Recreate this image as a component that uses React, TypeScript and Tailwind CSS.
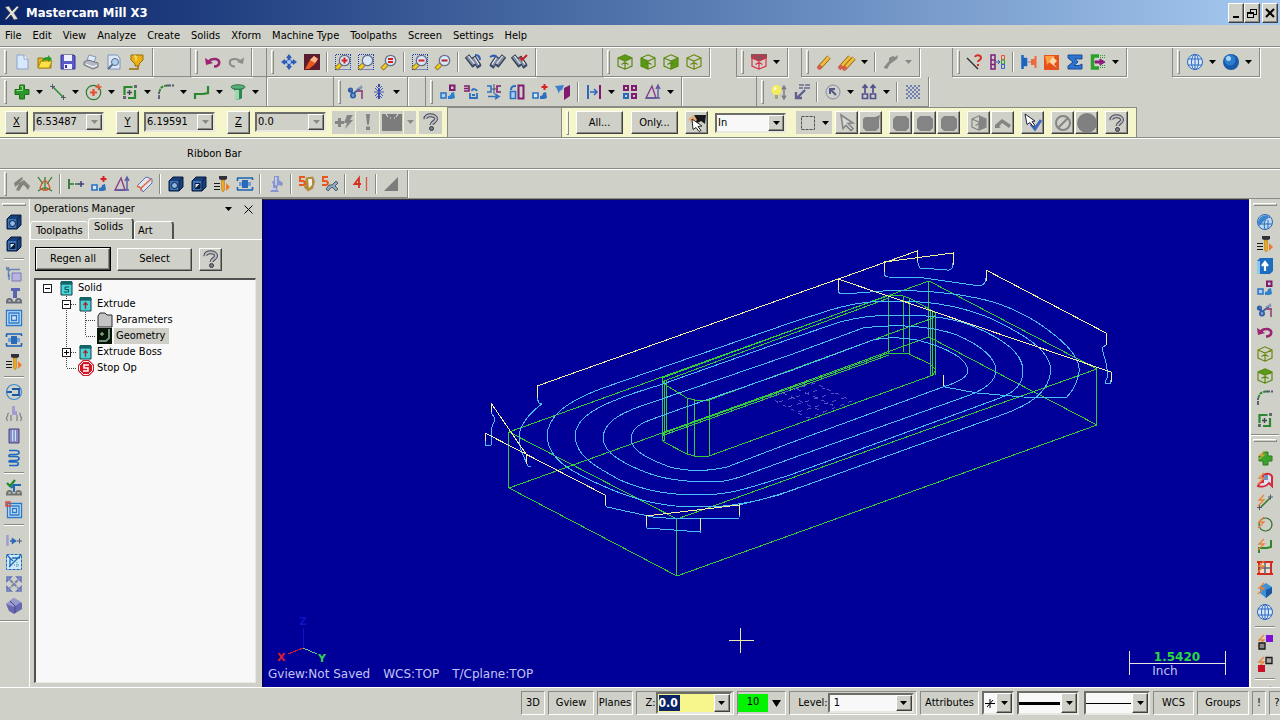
import { useState, type ReactNode } from "react";
import clsx from "clsx";

const cube = (stroke: string, face?: ReactNode) => (
  <>
    {face}
    <path
      d="M1 4 8 .8 15 4v8l-7 3.200L1 12zM1 4l7 3 7-3M8 7v8M4.500 10.500l3.500-2 3.500 2"
      fill="none"
      stroke={stroke}
      strokeWidth="1.2"
    />
  </>
);

const darkCube = (hole: ReactNode) => (
  <>
    <path d="M1 5 5 1h10v10l-4 4H1z" fill="#16417c" stroke="#0a1a3c" />
    <path d="M2 5h9v9H2z" fill="#3f74b8" />
    <path d="M11 5l4-4M11 5v10" stroke="#0a1a3c" />
    {hole}
  </>
);

const magnifier = (inner?: ReactNode, box?: boolean) => (
  <>
    {box && <path d="M1 .5h15M.5 15.5h15M.5 1v15M15.5 1v15" stroke="#1c3cb4" strokeDasharray="1 1" />}
    <path d="M1 15l6-6" stroke="#7a6420" strokeWidth="4.5" />
    <path d="M1.5 14.5l5-5" stroke="#f4cc20" strokeWidth="3" />
    <circle cx="9.5" cy="6.500" r="5.200" fill="#d8e8f8" stroke="#687088" strokeWidth="1.3" />
    {inner}
  </>
);

const binocular = (extra: ReactNode) => (
  <>
    <path d="M1 2l7 9M7 3l6 9" stroke="#30384a" strokeWidth="5.500" />
    <path d="M1.500 2.500l6.500 8M7.500 4l5 7.500" stroke="#8490a4" strokeWidth="3.500" />
    <path d="M2.500 2l6 8M8.500 3.500l4.500 7" stroke="#e4eaf2" strokeWidth="1.2" />
    <path d="M6 13l4-3M11 14l4-3" stroke="#384870" strokeWidth="2" />
    {extra}
  </>
);

const pencil = (x: number) => (
  <>
    <path d={`M${x} 14 l10 -11`} stroke="#8a6414" strokeWidth="4.5" />
    <path d={`M${x} 14 l10 -11`} stroke="#f0bc3c" strokeWidth="3" />
    <path d={`M${x - 1} 15 l3 -3.5`} stroke="#d85a50" strokeWidth="3.5" />
  </>
);

const bolt = <path d="M7 1 2 6h5l-6 6" fill="none" stroke="#e8843c" strokeWidth="1.3" />;

const icons: Record<string, ReactNode> = {
  new: (
    <>
      <path d="M3 1h7l4 4v10H3z" fill="#d8e8fc" stroke="#8aa4cc" />
      <path d="M10 1v4h4" fill="#fff" stroke="#8aa4cc" />
    </>
  ),
  open: (
    <>
      <path d="M1 14V4h5l1 2h7v8z" fill="#e8b41c" stroke="#9a7410" />
      <path d="M1 14l3-7h11l-3 7z" fill="#fbe04a" stroke="#b08a14" />
      <path d="M5 8c0-4 3-5 6-5V1l4 4-4 3V6c-3 0-4 0-6 2z" fill="#2c9a2c" />
    </>
  ),
  save: (
    <>
      <path d="M1 1h13l1 1v13H1z" fill="#5a5ac8" stroke="#34349a" />
      <path d="M4 1h8v6H4zM4 10h8v5H4z" fill="#eef0ff" />
      <path d="M5 11h2v3H5z" fill="#34349a" />
    </>
  ),
  print: (
    <>
      <path d="M6 1l7 2-2 5-7-2z" fill="#e0ecfc" stroke="#8a96b0" />
      <path d="M1 8l4-2 10 3v4l-5 2-9-4z" fill="#b4b8c4" stroke="#70747e" />
      <path d="M3 10l7 3 4-2" fill="none" stroke="#fff" />
    </>
  ),
  preview: (
    <>
      <path d="M2 1h9l3 3v11H2z" fill="#dce8f8" stroke="#7c94bc" />
      <circle cx="9" cy="8" r="3.5" fill="#b0d0f0" stroke="#5c6c88" />
      <path d="M6.5 10.5 2 15" stroke="#5c6c88" strokeWidth="2" />
    </>
  ),
  funnel: (
    <>
      <path d="M2 1h12v5l-4 4v2H6v-2L2 6z" fill="#e8b010" stroke="#9a6e08" />
      <path d="M5 2h2v5" stroke="#fff0a0" fill="none" />
      <path d="M0 15h9v-3" fill="none" stroke="#9a6e08" strokeWidth="1.5" />
    </>
  ),
  undo: (
    <>
      <path d="M9 12.500c7 0 7-8 0-7.500-2 0-4 1-5 2.500" fill="none" stroke="#9c2474" strokeWidth="2.6" />
      <path d="M0 4l1 7 7-2z" fill="#9c2474" />
    </>
  ),
  redo: (
    <>
      <path d="M7 12.500c-7 0-7-8 0-7.500 2 0 4 1 5 2.500" fill="none" stroke="#8c8c8c" strokeWidth="2.200" />
      <path d="M16 3.500l-1 6.500-6-2z" fill="#8c8c8c" />
    </>
  ),
  pan: (
    <>
      <path d="M8 0l3 4H9.5v2.5H12V5l4 3-4 3V9.5H9.5V12H11l-3 4-3-4h1.5V9.5H4V11L0 8l4-3v1.5h2.5V4H5z" fill="#2c5cb8" />
      <circle cx="8" cy="8" r="2" fill="#a8c8f4" />
    </>
  ),
  repaint: (
    <>
      <path d="M0 0h16v16H0z" fill="#5a1c30" />
      <path d="M1 15 6 6l4-4 4 3-3 5-6 5z" fill="#e85a1c" />
      <path d="M6 6l4-4 4 3-3 4z" fill="#fcb488" />
    </>
  ),
  repaintOrange: (
    <>
      <path d="M0 1h15v15H0z" fill="#e8501c" />
      <path d="M1 2h10L3 11z" fill="#fca040" />
      <path d="M5 8l4-5 4 4-3 3 3 4z" fill="#fcd8a8" />
    </>
  ),
  zoomWindow: magnifier(<path d="M9.5 3.5v6M6.5 6.5h6" stroke="#d82020" strokeWidth="2" />, true),
  zoomTarget: magnifier(null, true),
  zoomSel: magnifier(<path d="M7 5h5M7 8h5" stroke="#d82020" strokeWidth="1.800" />),
  unzoom: magnifier(<path d="M6.5 6.5h6" stroke="#d82020" strokeWidth="2" />, true),
  unzoomHalf: magnifier(<path d="M6.5 6.5h6" stroke="#b82020" strokeWidth="2" />),
  bino: binocular(<path d="M9 1c3 0 5 2 5 5" fill="none" stroke="#2c5cb8" strokeWidth="2" />),
  binoBack: (
    <g transform="translate(16 0) scale(-1 1)">
      {binocular(<path d="M15 3c-3-2-5-2-7 0" fill="none" stroke="#2c5cb8" strokeWidth="2" />)}
    </g>
  ),
  binoCheck: binocular(<path d="M8 3l2 3 5-5" fill="none" stroke="#c82020" strokeWidth="2" />),
  cubeTop: cube("#5a8a10", <path d="M1 4 8 .8 15 4 8 7z" fill="#5a9a18" />),
  cubeFront: cube("#5a8a10", <path d="M1 4l7 3v8l-7-3z" fill="#5a9a18" />),
  cubeSide: cube("#5a8a10", <path d="M15 4 8 7v8l7-3z" fill="#5a9a18" />),
  cubeIso: cube("#6a8a10"),
  cubeRed: cube("#d83048", <path d="M0 0h16v4l-8 3-8-3z" fill="#8a5058" />),
  pencil: pencil(3),
  pencils: (
    <>
      {pencil(1)}
      <g transform="translate(4 1)">{pencil(1)}</g>
    </>
  ),
  eraserGray: <path d="M1 13l5-6V4l4-2 2 1 3-2-1 4-7 5-3 5-3-1z" fill="#8a8a84" />,
  lineQ: (
    <>
      <path d="M0 4l11 11" stroke="#282828" strokeWidth="1.2" />
      <path d="M8 3c1-3 6-2 6 1 0 2-3 2-3 4M11 10v2" fill="none" stroke="#d82c20" strokeWidth="2" />
    </>
  ),
  columns: (
    <>
      <path d="M1 1h4v14H1zM1 6h4M1 10.5h4" fill="none" stroke="#7c1c7c" strokeWidth="1.5" />
      <path d="M6 8h4M8 6l2 2-2 2" stroke="#2c5cb8" fill="none" />
      <path d="M11.5 1.500h3v4h-3z" fill="none" stroke="#e85030" />
      <path d="M11.5 6h3v4h-3z" fill="none" stroke="#30a030" />
      <path d="M11.5 10.5h3v4h-3z" fill="none" stroke="#3060d0" />
    </>
  ),
  blocks: (
    <>
      <path d="M1.500 1v14M2 5h3v6H2z" fill="#1c64c0" stroke="#1c64c0" strokeWidth="2.500" />
      <path d="M14.500 2v12M11 6h3v4h-3z" fill="#f0683c" stroke="#f0683c" strokeWidth="2" />
      <path d="M6 8h4" stroke="#9a9ab0" strokeWidth="1.5" />
    </>
  ),
  sigma: <path d="M1 1h14v4h-3L8 4.5 11 8l-4 3.500h5L15 10v5H1v-3l5-4-5-4z" fill="#2c74d0" stroke="#1a4a98" />,
  exit: (
    <>
      <path d="M9 2H2.500v12H9" fill="none" stroke="#2ca02c" strokeWidth="3.5" />
      <path d="M10.500 1v4M12.500 1v4M14.500 1v4M10.500 11v4M12.500 11v4M14.500 11v4" stroke="#2ca02c" strokeDasharray="1 1" />
      <path d="M5 7h5V5l5 3-5 3V9H5z" stroke="#8c1c7c" fill="#8c1c7c" />
    </>
  ),
  globe: (
    <g fill="none" stroke="#2c68c0">
      <circle cx="8" cy="8" r="7.5" fill="#d8e8f8" />
      <ellipse cx="8" cy="8" rx="3.5" ry="7.5" />
      <path d="M1 5h14M1 11h14M8 .5v15" />
    </g>
  ),
  sphere: (
    <>
      <circle cx="8" cy="8" r="8" fill="#1a58a8" />
      <circle cx="7" cy="6" r="5.5" fill="#2c7ccc" />
      <circle cx="5.5" cy="4.5" r="2.5" fill="#a8d4f8" />
    </>
  ),
  plus: (
    <>
      <path d="M5.5 1h5v4.5H15v5h-4.500V15h-5v-4.500H1v-5h4.500z" fill="#2c982c" stroke="#1c701c" />
      <path d="M6.5 2.5h2v4h-6" fill="none" stroke="#90dc80" />
    </>
  ),
  line: (
    <>
      <path d="M3 3l10 10" stroke="#2c882c" strokeWidth="1.5" />
      <path d="M0 2.5h5M2.5 0v5M11 13.5h5M13.5 11v5" stroke="#585878" />
    </>
  ),
  circle: (
    <>
      <circle cx="7.500" cy="8.5" r="7.200" fill="none" stroke="#2c782c" strokeWidth="1.2" />
      <path d="M7.500 5v7M4 8.5h7" stroke="#e8502c" strokeWidth="2.200" />
      <path d="M12.500 0v6M9.5 3h6" stroke="#e8502c" strokeWidth="1.6" />
    </>
  ),
  rect: (
    <>
      <path d="M2.500 11V3h8M13 6v8H6" fill="none" stroke="#2c882c" strokeWidth="2.200" />
      <path d="M7.500 6v5M5 8.5h5" stroke="#404850" strokeWidth="1.5" />
      <path d="M12 1h3v3h-3zM1 12h3v3H1z" fill="#606870" />
    </>
  ),
  fillet: (
    <>
      <path d="M1 15V8M9 1.500h7" stroke="#505870" strokeWidth="1.8" strokeDasharray="4 1" />
      <path d="M1.500 8C2 4 4 2 9 1.500" fill="none" stroke="#2c882c" strokeWidth="1.8" strokeDasharray="3 1" />
    </>
  ),
  spline: <path d="M1 15v-5h8l5-1V2" fill="none" stroke="#2c882c" strokeWidth="2.200" />,
  cylinder: (
    <>
      <path d="M1.500 3h13L12 6v8c-2 2-5 2-7 1V7z" fill="#2c8850" />
      <path d="M5 6h4v9.500c-2 0-3 0-4-.5z" fill="#a0d8b0" />
      <ellipse cx="8" cy="3" rx="7" ry="2.200" fill="#58b078" stroke="#2c7848" />
    </>
  ),
  trim: (
    <>
      <path d="M1 5l5 6M6 9l8-6" stroke="#3c64a8" strokeWidth="2" />
      <circle cx="2.500" cy="6" r="1.800" fill="none" stroke="#2c5ca8" strokeWidth="1.6" />
      <circle cx="5" cy="11.500" r="2.200" fill="#7c9cd0" stroke="#2c5ca8" strokeWidth="1.6" />
      <path d="M9 7h6M14 7v8" stroke="#98507c" strokeWidth="1.8" />
      <path d="M8 5l6-4v4z" fill="#8a98b8" />
    </>
  ),
  breakTool: (
    <>
      <path d="M8 0v16" stroke="#3848a8" strokeWidth="2" strokeDasharray="3 1" />
      <path d="M4 4l8 8M12 4l-8 8M3 8h10M5 2l3 3 3-3M5 14l3-3 3 3" fill="none" stroke="#4858b8" />
    </>
  ),
  xformMove: (
    <>
      <path d="M10 1.500h4.5V6H10z" fill="none" stroke="#801c70" strokeWidth="2" />
      <path d="M1 9h5v5H1z" fill="#a8d0f8" stroke="#2c70c0" strokeWidth="1.5" />
      <path d="M8 15v-3c2 0 3-1 3-3l3-1 1 6-3 1z" fill="#2c80cc" />
    </>
  ),
  xformRotate: (
    <>
      <path d="M1 2h5v5H1M1 4.5h4" fill="none" stroke="#801c70" strokeWidth="1.6" />
      <path d="M9 7c0-3 4-2 5 0" fill="none" stroke="#2c70c0" strokeWidth="2" />
      <path d="M7 9v5h7V9M9 11h3" fill="none" stroke="#2c70c0" strokeWidth="1.8" />
    </>
  ),
  xformMirror: (
    <>
      <path d="M1 2h4v6H1" fill="none" stroke="#2c70c0" strokeWidth="1.6" />
      <path d="M15 2h-4v6h4" fill="none" stroke="#801c70" strokeWidth="1.6" />
      <path d="M8 0v10M6 5h4" stroke="#484870" />
      <path d="M2 12.5h9M9 10l4 2.5L9 15" fill="none" stroke="#2c70c0" strokeWidth="1.6" />
    </>
  ),
  xformScale: (
    <>
      <path d="M9.5 1.500h5v13h-5z" fill="none" stroke="#801c70" strokeWidth="2" />
      <path d="M1.500 7.5h5v7h-5z" fill="#a8d0f8" stroke="#2c70c0" strokeWidth="1.6" />
      <path d="M2 6c0-3 1-4 4-4V1" fill="none" stroke="#2c70c0" strokeWidth="2" />
    </>
  ),
  xformPlus: (
    <>
      <path d="M12.5 0v6M9.5 3h6" stroke="#d82020" strokeWidth="2" />
      <path d="M1 9h5v5H1z" fill="#d8e8f8" stroke="#2c70c0" strokeWidth="1.6" />
      <path d="M8 15v-3c2 0 3-1 3-3l3-1 1 6-3 1z" fill="#2c70c0" />
    </>
  ),
  xformProject: (
    <>
      <path d="M0 2l9-1-2 5c-2 0-3 1-3 4L2 5z" fill="#3c80cc" />
      <path d="M9 4l6-3v11l-6 4z" fill="#801c70" />
    </>
  ),
  offset: (
    <>
      <path d="M2 1v14" stroke="#2c68c0" strokeWidth="2" />
      <path d="M14 1v14" stroke="#801c70" strokeWidth="2" />
      <path d="M4 8h6M8 5l3 3-3 3" fill="none" stroke="#2c68c0" strokeWidth="1.6" />
    </>
  ),
  array: (
    <g fill="none" strokeWidth="2">
      <path d="M2 2h4v4H2zM10 2h4v4h-4zM10 10h4v4h-4z" stroke="#801c70" />
      <path d="M2 10h4v4H2z" stroke="#2c68c0" />
    </g>
  ),
  triangle: (
    <>
      <path d="M1 14 7 2l4 12z" fill="none" stroke="#8a3c8a" strokeWidth="1.4" />
      <path d="M13 14V3M11 5l2-4 2 4M1 14h14" fill="none" stroke="#5a5aa0" strokeWidth="1.4" />
    </>
  ),
  bulb: (
    <>
      <circle cx="5.5" cy="6" r="5" fill="#f4ec58" />
      <circle cx="4" cy="4.5" r="1.5" fill="#fffde0" />
      <path d="M4 11h3v4H4z" fill="#a8a07c" />
      <path d="M13 4v9M11 5.5 13 2l2 3.5M11 11.500l2 3.5 2-3.5" fill="none" stroke="#707080" strokeWidth="1.3" />
    </>
  ),
  arrowDown: (
    <>
      <path d="M5 1h5M11 1h5M5 4h4M10 4h6" stroke="#686890" strokeWidth="1.5" />
      <path d="M11 6 4 13M2 8v6h6" fill="none" stroke="#606090" strokeWidth="2.4" />
    </>
  ),
  circleArrow: (
    <>
      <circle cx="8" cy="8" r="7" fill="none" stroke="#8888a8" />
      <path d="M11 11 6 6M5 10V5h5" fill="none" stroke="#585888" strokeWidth="2" />
    </>
  ),
  upArrows: (
    <g fill="none" stroke="#50508c" strokeWidth="1.7">
      <path d="M4 9V1M1.500 4 4 1l2.5 3M12 9V1M9.5 4 12 1l2.5 3" />
      <path d="M1.500 10h5v4.5h-5zM9.5 10h5v4.5h-5z" />
    </g>
  ),
  checker: (
    <>
      <path d="M1 2h14M1 6h14M1 10h14M1 14h14" stroke="#7480b0" strokeWidth="2" strokeDasharray="2 2" />
      <path d="M3 4h12M3 8h12M3 12h12" stroke="#7480b0" strokeWidth="2" strokeDasharray="2 2" />
    </>
  ),
  fastPoint: <path d="M-1 7h3V4h3v3h3v3H5v3H2v-3h-3zM11 1h6l-3 5h3l-8 9 2-6H8z" fill="#848484" />,
  bang: <path d="M6 0h4L9 10.5H7zM6 12.5h4V16H6z" fill="#848484" />,
  pad: (
    <>
      <path d="M-2 0h20v17H-2z" fill="#7c7c7c" />
      <path d="M2 0l2 3M14 0l-2 3M6 4h1M10 4h1" stroke="#eee" />
    </>
  ),
  help: (
    <>
      <path d="M2.5 5C2 0 13 0 13 5c0 3-4.5 3-4.5 6" fill="none" stroke="#484850" strokeWidth="4" />
      <path d="M2.5 5C2 0 13 0 13 5c0 3-4.5 3-4.5 6" fill="none" stroke="#b8bcc4" strokeWidth="2" />
      <circle cx="8.5" cy="14.500" r="2" fill="#787c84" stroke="#383840" />
    </>
  ),
  pickCursor: (
    <>
      <path d="M5 0h12l-1 9-4-3-5 3z" fill="#18181c" />
      <path d="M-1 4l6-4 3 5-4 4z" fill="#e8ac7c" />
      <path d="M3 4l10 7-4 .5 3 4-2 1-3-4-3 2z" fill="#fff" stroke="#282828" />
    </>
  ),
  marquee: <path d="M1.500 1.500h13v13h-13z" fill="none" stroke="#505050" strokeDasharray="3 1" />,
  cursor: <path d="M2 0l12 8-5 .5 5 5-2 2-5-5-3 3z" fill="#d8d8d2" stroke="#848484" strokeWidth="1.6" />,
  blob: <path d="M3 1h10l3 3v9l-3 3H3l-3-3V4z" fill="#848484" />,
  blobEdge: <path d="M2 2h10l5-2-1 6v7l-3 3H3l-3-3V4z" fill="#848484" />,
  ball: <circle cx="8" cy="8" r="10" fill="#808080" />,
  cubeGray: cube("#848484", <path d="M15 4 8 7v8l7-3zM8 1v6l6-3z" fill="#848484" />),
  arrowGray: <path d="M0 13v-3l7-6 9 6-2 3-7-5-3 4 2 1z" fill="#848484" />,
  cursorCheck: (
    <>
      <path d="M6 9l4 5 6-9" fill="none" stroke="#3c64c0" strokeWidth="3" />
      <path d="M0-1l10 7-3 .500 3 4-2 1-3-4-3 2z" fill="#fff" stroke="#202838" />
    </>
  ),
  ban: (
    <g fill="none" stroke="#848484" strokeWidth="2">
      <circle cx="8" cy="8" r="7" />
      <path d="M12.500 3.5 3.500 12.5" />
    </g>
  ),
  hammerGray: <path d="M0 7l8-6 1 2-4 4 5-3 6 6-2 4-3-4-2-1-4 6-3-1 3-6-4 3z" fill="#84847c" />,
  sail: (
    <>
      <path d="M1 1l5 7M15 1l-5 7M1 15l5-3h4l5 3M8 1v14" fill="none" stroke="#2c782c" strokeWidth="1.2" />
      <path d="M5 7c2-3 4-3 6 0l2 5-3 2H6l-3-2z" fill="none" stroke="#d8582c" strokeWidth="1.3" />
    </>
  ),
  dim: (
    <>
      <path d="M1 3v10" stroke="#2c782c" strokeWidth="1.8" />
      <path d="M2 8h8" stroke="#2c782c" strokeWidth="1.6" strokeDasharray="4 1" />
      <path d="M10 8h6M13 5v6" stroke="#3c3c78" strokeWidth="1.4" />
    </>
  ),
  rollers: (
    <>
      <path d="M0 10 9 1l6 2v4l-9 9-2-4z" fill="#e0e4ee" stroke="#6070b0" />
      <path d="M4 12l10-9M0 10l4 2v3" fill="none" stroke="#e0683c" strokeWidth="1.5" />
    </>
  ),
  cubeHole: darkCube(<circle cx="6.5" cy="9.5" r="3" fill="#8cb8e8" stroke="#0a1a3c" />),
  cubeSquare: darkCube(
    <>
      <path d="M4 7.500h5v5H4z" fill="#d8e4f0" stroke="#0a1a3c" />
      <path d="M4 12.5l5-5v5z" fill="#0a1a3c" />
    </>
  ),
  drill: (
    <>
      <path d="M5 0h8v3l-2 1H7L5 3z" fill="#30303c" />
      <path d="M7.500 4h3v10L9 16l-1.500-2z" fill="#e8a820" stroke="#a87410" strokeWidth=".5" />
      <path d="M0 7.5h6M0 10.5h6M0 13.5h6" stroke="#181818" strokeWidth="1.2" />
      <path d="M12 7l4 4-4 4z" fill="#f0782c" />
    </>
  ),
  pocket: (
    <>
      <path d="M0 2h16M0 14h16M.5 2v3M15.500 11v3M15.500 2v2M.5 11v3" stroke="#1c64b4" strokeWidth="1.6" />
      <path d="M2 6h12v4H2z" fill="#6ca0dc" />
      <path d="M5 4h6v8H5z" fill="#2c68b8" />
    </>
  ),
  holder: (
    <>
      <path d="M6 0h5v4l4 3-1 3-4-1-1 4 2 3H2l3-4V8L4 6l2-2z" fill="#8894cc" />
      <path d="M8 1v8M3 13h5" stroke="#d0d8f4" strokeWidth="1.6" />
    </>
  ),
  five: (
    <>
      <path d="M7 1.500l7-1 2 5-2 7-5 3-4-4z" fill="#b08c3c" />
      <path d="M9 3h4v6l-3 3z" fill="#f0f0ec" />
      <path d="M6 1H1v4h3c3 1 2 4 0 4H0" fill="none" stroke="#e8581c" strokeWidth="2" />
    </>
  ),
  fiveTool: (
    <>
      <path d="M6 1H1v4h3c3 1 2 4 0 4H0" fill="none" stroke="#e8581c" strokeWidth="2" />
      <path d="M7 9l3 0 4-4 2 2-3 3 3 3-2 2-4-4-4 4-2-2z" fill="#8ca8c0" stroke="#505c68" />
    </>
  ),
  four: (
    <>
      <path d="M6 12V2L1.500 8H8" fill="none" stroke="#d83020" strokeWidth="1.800" />
      <path d="M13.5 1v14" stroke="#d85840" strokeWidth="1.3" />
    </>
  ),
  wedge: <path d="M0 15 14 1v14z" fill="#7c7c7c" />,
  contour: (
    <>
      <path d="M0 3.500h14M2.500 1v10M0 1l4 4" stroke="#6c84b4" strokeWidth="1.5" fill="none" />
      <path d="M6 7h9v8H6z" fill="#b8b4e0" stroke="#7878b8" />
      <path d="M3 8v6" stroke="#2c70c0" />
    </>
  ),
  mill: (
    <>
      <path d="M5 0h9v3h-3v7H7V3H5z" fill="#5a64b0" />
      <path d="M1 14c0-4 5-4 5 0M10 14c0-4 5-4 5 0M0 14.5h16" fill="none" stroke="#686c78" strokeWidth="2" />
    </>
  ),
  spiral: (
    <>
      <path d="M0 0h16v16H0z" fill="#cce4f8" />
      <path d="M.5.5h15v15H.5zM3 3h10v10H3zM5.5 5.5h5v5h-5z" fill="none" stroke="#2c78c8" strokeWidth="1.3" />
    </>
  ),
  hook: (
    <>
      <circle cx="8" cy="8" r="7.500" fill="none" stroke="#3c88d0" strokeWidth="1.2" />
      <path d="M1 8h5M6 5h7v6H6" fill="none" stroke="#1c58a8" strokeWidth="1.8" />
    </>
  ),
  threads: (
    <>
      <path d="M6 0h3v5h2v4H6z" fill="#a09cd0" />
      <path d="M3 7c-3 1 0 2-2 4s1 2 0 4M5 9v6M11 9v6M13 7c3 1 0 2 2 4s-1 2 0 4" fill="none" stroke="#808488" strokeWidth="1.3" />
    </>
  ),
  slot: (
    <>
      <path d="M3 1h10v14H3z" fill="#8c8cc4" stroke="#44447c" />
      <path d="M6 2h4v11H6z" fill="#d4dcf4" />
      <path d="M8 2v11" stroke="#2c68b8" />
    </>
  ),
  helix: (
    <path
      d="M3 .500h7c4 0 4 4 0 4H4M4 4.500c-2 1-1 2 0 2h6c4 0 4 4 0 4H4M4 10.500c-2 1-1 1.500 0 1.500h6c3 0 3 3.500 0 3.500H3"
      fill="none"
      stroke="#1c68c0"
      strokeWidth="1.6"
    />
  ),
  millCheck: (
    <>
      <path d="M1 3l3 3 5-6" fill="none" stroke="#1c882c" strokeWidth="2.200" />
      <path d="M8 12V5h7M5 8l3-3" fill="none" stroke="#1c68b0" strokeWidth="2" />
      <path d="M1 14c0-4 5-4 5 0M10 14c0-4 5-4 5 0M0 14.5h16" fill="none" stroke="#70746c" strokeWidth="1.8" />
    </>
  ),
  spiralRed: (
    <>
      <path d="M1 1h15v15H1z" fill="#cce4f8" />
      <path d="M1.500 1.500h14v14h-14zM4 4h9v9H4zM6.5 6.5h4v4h-4z" fill="none" stroke="#2c78c8" strokeWidth="1.3" />
      <path d="M0 0h4v4H0z" fill="none" stroke="#d84838" strokeWidth="1.5" />
    </>
  ),
  dimBlue: (
    <>
      <path d="M1.500 3v11" stroke="#a09cd0" strokeWidth="2.5" />
      <path d="M4 9h4M6.500 7l3 2-3 2z" fill="#2c68b8" stroke="#2c68b8" strokeWidth="1.6" />
      <path d="M11 9h5M13.5 6.5v5" stroke="#505880" />
    </>
  ),
  surf: (
    <>
      <path d="M.5.5h15v15H.5z" fill="#d0e8f8" stroke="#1c68b8" strokeDasharray="3 1" />
      <path d="M1 1l6 6M15 1 3 13M4 4v9M6 4h8" fill="none" stroke="#1c68b8" strokeWidth="1.3" />
      <path d="M8 11h6M11 8v6" stroke="#2c98a8" strokeDasharray="1 1" />
    </>
  ),
  expand: (
    <>
      <path d="M1 5V1h4zM11 1h4v4zM1 11v4h4zM11 15h4v-4z" fill="none" stroke="#6474bc" strokeWidth="1.6" />
      <path d="M4 4l8 8M12 4l-8 8" stroke="#7c84a8" strokeWidth="2" strokeDasharray="4 1" />
    </>
  ),
  block: (
    <>
      <path d="M0 6 8 0l8 5v6l-8 5-5-3z" fill="#6868b0" />
      <path d="M0 6l8-6 7 4-7 5z" fill="#9898cc" />
      <path d="M4 3l5 5v7" fill="none" stroke="#484888" />
    </>
  ),
  globeHalf: (
    <>
      <circle cx="8" cy="8" r="7.5" fill="#b8d8f4" stroke="#2c68b0" />
      <path d="M2 12 12 2A7.500 7.500 0 0 0 2 12z" fill="#3c84cc" />
      <path d="M8 15C6 9 8 4 13 3M3 10h12M11 15V6" fill="none" stroke="#2c68b0" />
    </>
  ),
  boxUp: (
    <>
      <path d="M0 3l3-3h13v13l-3 3H0z" fill="#1c6cc0" />
      <path d="M0 3h3v13H0z" fill="#8cc8f0" />
      <path d="M8 13V5M5 8l3-4 3 4" fill="none" stroke="#fff" strokeWidth="2.200" />
    </>
  ),
  boltPlus: (
    <>
      <path d="M6 2h5v4h4v5h-4v4H6v-4H2V6h4z" fill="#3ca42c" stroke="#2c7c1c" />
      <path d="M8 1 3 5h4L2 9" fill="none" stroke="#c8a83c" strokeWidth="1.3" />
    </>
  ),
  boltShape: (
    <>
      <path d="M6 4c4-4 10-2 9 3v7l-3-3c-3 4-8 4-11 3 1-3 3-4 5-4z" fill="#dce4f4" stroke="#d82838" strokeWidth="2" />
      <path d="M7 3h4v5H6z" fill="#6c94cc" />
      {bolt}
    </>
  ),
  boltLine: (
    <>
      <path d="M4 13l9-9" stroke="#2c7c2c" strokeWidth="1.6" />
      <path d="M0 13.5h5M2.5 11v5M11 3h5M13.5.5v5" stroke="#505878" />
      {bolt}
    </>
  ),
  boltCircle: (
    <>
      <circle cx="8.5" cy="8.5" r="6.500" fill="none" stroke="#2c6c2c" strokeWidth="1.2" />
      {bolt}
    </>
  ),
  boltSpline: (
    <>
      <path d="M2 15v-5h8l4-1V2" fill="none" stroke="#2c882c" strokeWidth="2" />
      {bolt}
    </>
  ),
  gridRed: (
    <>
      <path d="M2 2h12v12H2zM0 2h16M0 14h16" fill="#f0dcd0" stroke="#d8281c" strokeWidth="2" />
      <path d="M8 2v12M2 8h12" stroke="#586878" strokeWidth="1.6" />
      {bolt}
    </>
  ),
  boltCube: (
    <>
      <path d="M3 5l6-4 6 4v6l-6 5-6-5z" fill="#3c90d8" />
      <path d="M9 8l6-3v6l-6 5z" fill="#1858a0" />
      {bolt}
    </>
  ),
  swatchUp: (
    <>
      {bolt}
      <path d="M9 1h7v7H9z" fill="#7c10d8" />
      <path d="M2 9h6v6H2z" fill="#888" stroke="#181818" strokeWidth="1.3" />
    </>
  ),
  swatchDown: (
    <>
      {bolt}
      <path d="M9 1.500h6v6H9z" fill="#aaa" stroke="#181818" strokeWidth="1.3" />
      <path d="M1 9h7v7H1z" fill="#c81028" />
    </>
  ),
  opSolid: (
    <>
      <path d="M2 4h11v11H2z" fill="#48d4d8" stroke="#103c40" />
      <path d="M2 1h11l1 3H1z" fill="#146468" />
      <path d="M10 7H6v2.5h3.5V12H5" fill="none" stroke="#0c5054" />
    </>
  ),
  opExtrude: (
    <>
      <path d="M2 4h11v11H2z" fill="#48d4d8" stroke="#103c40" />
      <path d="M2 1h11l1 3H1z" fill="#146468" />
      <path d="M7.5 13V7M5.5 9l2-2.5 2 2.5" fill="none" stroke="#a02c2c" strokeWidth="1.3" />
    </>
  ),
  opFolder: <path d="M1 15V4l2-3h5l2 2h5v12z" fill="#c4c4c4" stroke="#282828" />,
  opGeometry: (
    <>
      <path d="M0 0h15v16H0z" fill="#081408" />
      <path d="M12 1v9l-3 3H2" fill="none" stroke="#709078" strokeWidth="2" />
      <path d="M5 4v4M3 6h4" stroke="#a0d8a0" />
    </>
  ),
  opStop: (
    <>
      <path d="M5 0h6l5 5v6l-5 5H5l-5-5V5z" fill="#d01828" />
      <path d="M5.5 1.500h5l4 4v5l-4 4h-5l-4-4v-5z" fill="none" stroke="#fff" />
      <path d="M11 5H6v3h4v3H5" fill="none" stroke="#fff" strokeWidth="1.5" />
    </>
  ),
};

const Icon = ({ name }: { name: string }) => (
  <svg viewBox="0 0 16 16" className="size-4 shrink-0 overflow-visible" aria-hidden="true">
    {icons[name]}
  </svg>
);

const Arrow = ({ muted, big }: { muted?: boolean; big?: boolean }) => (
  <svg viewBox="0 0 7 4" className={clsx("shrink-0", big ? "w-[9px] h-[7px]" : "w-[7px] h-1")} preserveAspectRatio="none" aria-hidden="true">
    <path d="M0 0h7L3.500 4z" fill={muted ? "#8a8a84" : "#000"} />
  </svg>
);

// "|" is a separator, "v" a drop-down arrow, "v-" a disabled one
const ToolGroup = ({ items, className }: { items: string[]; className?: string }) => (
  <div className={clsx("flex h-full shrink-0 items-center border-r border-b border-[#8a8a84] pl-1 pr-1 shadow-[1px_1px_0_#fff]", className)}>
    <span className="mr-[3px] h-6 w-[3px] border border-t-white border-l-white border-r-[#8a8a84] border-b-[#8a8a84]" />
    {items.map((item, i) => {
      if (item === "|") return <span key={i} className="mx-[3px] h-5 w-0.5 border-l border-r border-l-[#8a8a84] border-r-white" />;
      if (item === "v" || item === "v-")
        return (
          <button key={i} type="button" aria-label="More" className="flex h-6 w-[13px] items-center justify-center">
            <Arrow muted={item === "v-"} />
          </button>
        );
      return (
        <button key={i} type="button" aria-label={item} className="flex h-6 w-[23px] items-center justify-center">
          <Icon name={item} />
        </button>
      );
    })}
  </div>
);

const SideTools = ({ items }: { items: string[] }) => (
  <div className="flex flex-col items-center border-b border-[#8a8a84] pb-[3px] shadow-[0_1px_0_#fff]">
    <span className="mt-1 mb-[5px] h-[3px] w-6 border border-t-white border-l-white border-r-[#8a8a84] border-b-[#8a8a84]" />
    {items.map((item, i) =>
      item === "|" ? (
        <span key={i} className="my-[3px] h-0.5 w-5 border-t border-b border-t-[#8a8a84] border-b-white" />
      ) : (
        <button key={i} type="button" aria-label={item} className="flex h-[22px] w-6 shrink-0 items-center justify-center">
          <Icon name={item} />
        </button>
      )
    )}
  </div>
);

const raised = "border border-t-white border-l-white border-r-[#404040] border-b-[#404040] shadow-[inset_-1px_-1px_0_#8a8a84]";
const sunken = "border-2 border-t-[#6c6c68] border-l-[#6c6c68] border-r-[#e8e8e0] border-b-[#e8e8e0]";

const SquareButton = ({ icon, className }: { icon: string; className?: string }) => (
  <button
    type="button"
    aria-label={icon}
    className={clsx("flex h-[23px] w-[23px] shrink-0 items-center justify-center overflow-hidden bg-[#cfd0c8]", raised, className)}
  >
    <Icon name={icon} />
  </button>
);

const DropButton = ({ label, muted }: { label: string; muted?: boolean }) => (
  <button type="button" aria-label={label} className={clsx("flex w-4 shrink-0 items-center justify-center self-stretch bg-[#cfd0c8]", raised)}>
    <Arrow muted={muted} />
  </button>
);

const AxisField = ({ axis, initial }: { axis: string; initial: string }) => {
  const [value, setValue] = useState(initial);
  return (
    <div className="flex items-center gap-[5px]">
      <button type="button" className={clsx("h-[23px] w-[23px] bg-[#cfd0c8] underline", raised)}>
        {axis}
      </button>
      <div className={clsx("flex h-5 w-[71px] bg-[#cfd0c8]", sunken)}>
        <input
          aria-label={`${axis} coordinate`}
          value={value}
          onChange={(e) => setValue(e.target.value)}
          className="w-full min-w-0 bg-transparent px-px outline-none"
        />
        <DropButton label={`${axis} history`} muted />
      </div>
    </div>
  );
};

const menus = ["File", "Edit", "View", "Analyze", "Create", "Solids", "Xform", "Machine Type", "Toolpaths", "Screen", "Settings", "Help"];

const tree = [
  { guides: ["minus"], icon: "opSolid", label: "Solid" },
  { guides: ["none", "minusTee"], icon: "opExtrude", label: "Extrude" },
  { guides: ["none", "line", "tee"], icon: "opFolder", label: "Parameters" },
  { guides: ["none", "line", "end"], icon: "opGeometry", label: "Geometry", selected: true },
  { guides: ["none", "plusTee"], icon: "opExtrude", label: "Extrude Boss" },
  { guides: ["none", "end"], icon: "opStop", label: "Stop Op" },
];

const Guide = ({ kind }: { kind: string }) => {
  const box = kind.startsWith("minus") || kind.startsWith("plus");
  return (
    <svg viewBox="0 0 19 16" className="h-4 w-[19px] shrink-0" shapeRendering="crispEdges" aria-hidden="true">
      <g stroke="#404040" strokeDasharray="1 1">
        {(kind === "line" || kind.endsWith("ee")) && <path d="M9.5 0v16" />}
        {kind === "end" && <path d="M9.5 0v8" />}
        {(kind === "end" || kind.endsWith("ee")) && <path d="M10 8.5h9" />}
      </g>
      {box && <path d="M5.5 4.5h8v8h-8z" fill="#fff" stroke="#202020" />}
      {box && <path d="M7 8.5h5" stroke="#000" />}
      {kind.startsWith("plus") && <path d="M9.5 6v5" stroke="#000" />}
    </svg>
  );
};

const OperationsManager = () => {
  const [tab, setTab] = useState("Solids");
  return (
    <section className="flex w-[233px] shrink-0 flex-col border-l border-white pb-1">
      <div className="flex h-5 items-center pl-1 pr-[9px]">
        <h2 className="flex-1">Operations Manager</h2>
        <button type="button" aria-label="Panel menu" className="px-2">
          <Arrow />
        </button>
        <button type="button" aria-label="Close panel" className="pl-1">
          <svg viewBox="0 0 9 9" className="size-[9px]">
            <path d="M.5.5l8 8M8.5.5l-8 8" stroke="#000" />
          </svg>
        </button>
      </div>
      <div className="flex h-[21px] items-end border-b border-white">
        {["Toolpaths", "Solids", "Art"].map((name) => (
          <button
            key={name}
            type="button"
            onClick={() => setTab(name)}
            className={clsx(
              "rounded-t-sm border-t border-l border-t-white border-l-white text-left",
              tab === name ? "h-[21px] w-[46px] border-r-2 border-r-[#505050] px-[5px] pb-1" : "h-[18px]",
              name === "Toolpaths" && "w-[58px] pl-[5px]",
              name === "Art" && "w-10 border-r-2 border-r-[#505050] pl-[3px]"
            )}
          >
            {name}
          </button>
        ))}
      </div>
      <div className="flex h-[38px] items-center gap-[7px] pl-1.5">
        <button type="button" className={clsx("h-[22px] w-[74px] outline outline-black", raised)}>
          Regen all
        </button>
        <button type="button" className={clsx("h-[23px] w-[75px]", raised)}>
          Select
        </button>
        <SquareButton icon="help" />
      </div>
      <ul className="ml-1 mr-[6px] flex-1 border border-t-2 border-l-2 border-t-[#505050] border-l-[#505050] border-r-[#e8e8e0] border-b-[#e8e8e0] bg-[#f8f8f8] pl-0.5">
        {tree.map((node) => (
          <li key={node.label} className="flex h-4 items-center">
            {node.guides.map((kind, i) => (
              <Guide key={i} kind={kind} />
            ))}
            <span className="flex w-[19px] justify-center">
              <Icon name={node.icon} />
            </span>
            <span className={clsx("h-4 px-0.5 leading-4", node.selected && "bg-[#cfcfc8] pr-1")}>{node.label}</span>
          </li>
        ))}
      </ul>
    </section>
  );
};

const Viewport = () => (
  <main className="relative min-w-0 flex-1 border-t border-l-2 border-t-[#303040] border-l-[#000060] bg-[#000098] text-[#c4c4f0]">
    <svg viewBox="264 200 985 487" className="absolute inset-0 h-full w-full" fill="none" shapeRendering="crispEdges">
      <g stroke="#34cc3c">
        <path d="M509 432 929 281l168 88-420 150zM509 488l168 88 420-151-168-88zM508.5 432v56M676.5 519v57M1096.5 369v56M928.5 281v56" />
        <path d="M662 378l227-83 14 1 6 2 24 13 3 3-3 4-224 82h-14l-8-2-23-14-2-6zM664 381l225-83" />
        <path d="M664 433l225-80 20 1 21 10 6 6-3 5-224 81h-14l-8-2-23-12-2-3 2-6zM664 435l225-80" />
        <path d="M662.5 378v63M664.5 380v61M666.5 381v52M687.5 399v55M694.5 400v57M709.5 400v56M888.5 295v58M903.5 296v56M909.5 298v56M930.5 311v64M932.5 311v64M935.5 313v62" />
      </g>
      <g stroke="#4cc0fc">
        <path d="M790 323 603 388C565 402 547 417 547 437C549 458 565 469 603 486S670 507 697 507S735 505 760 500L790 491 1007 413C1035 402 1049 390 1051 370C1050 352 1030 337 990 318C955 304 925 301 893 301S845 306 830 310z" />
        <path d="M790 339 660 385C595 404 575 418 575 437C577 455 590 464 620 480C650 493 675 495 700 495S740 490 755 486L790 475 1000 398C1018 391 1023 382 1023 370C1022 353 1005 340 975 327C950 316 920 315 895 315S855 318 840 322z" />
        <path d="M790 355 653 402C615 414 603 424 603 439C605 453 620 462 645 472C665 480 690 482 710 482S735 478 743 476L790 459 970 395C990 387 996 379 996 370C995 355 975 343 957 335C930 325 890 324 863 328z" />
        <path d="M790 371 683 408 650 420C636 425 631 431 631 439C632 450 645 458 670 467C685 471 705 472 727 467L790 443 943 387C962 381 968 376 968 370C967 358 945 347 917 340C900 337 885 337 873 340z" />
        <path d="M537 398l2 5 3 1C529 413 519 426 519 438C519 448 523 455 528 466h3M491 412l4 7-3 8-1 18h-6v-4" />
        <path d="M605 505l2 2 46 10q30 3 57 1h29M646 526l1 2 53 4v-3M739 514v3M739 505l40-10 21-8" />
        <path d="M838 290q0 4 6 4l39-3q50-2 94 7t80 39q24 20 22 35t-13 26l-43-1-46-4-32-6-2-3" />
        <path d="M953 263q0 8-6 7l-27-2-3-7M884 272q0 5 4 5l36 1 56 8q6-2 6-8M1106 345l-4 3 4 15 2 12-3 8 5 1 1-4" />
      </g>
      <g stroke="#f4f09c">
        <path d="M537 398v-12l380-135v10M884 272v-10l69-9v12M838 290v-11l273 93v10M986 281v-11l120 63v12" />
        <path d="M491 412v-9l35 51v10M485 441v-8l120 62v10M646 526v-10l93-11v10M700 518v12M943 375v11" />
        <path d="M740.5 628v25M729 640.5h25" stroke="#e8e8b0" />
      </g>
      <path
        d="M768 397l47-14 37 18-44 17zM779 402l46-14M788 407l46-14M798 412l46-14M783 393l40 19M797 389l40 18"
        stroke="#5050c0"
        strokeDasharray="4 5"
      />
      <path d="M303.5 648v-20" stroke="#1414c0" />
      <path d="M303 648l-15 6" stroke="#c81c30" />
      <path d="M303 648l14 6" stroke="#60c8a0" />
      <path d="M1129.5 651v24M1225.5 651v24M1130 663.5h95" stroke="#e8e8e0" />
      <g shapeRendering="auto" fontSize="11" fontWeight="bold" fontFamily="'DejaVu Sans', sans-serif" stroke="none">
        <text x="299" y="625" fill="#1010c4">Z</text>
        <text x="277" y="661" fill="#e01c2c">X</text>
        <text x="318" y="662" fill="#30d050">Y</text>
      </g>
    </svg>
    <p className="absolute bottom-[5px] left-1 flex gap-[13px] font-['DejaVu_Sans',sans-serif] text-[12px] leading-4">
      <span>Gview:Not Saved</span>
      <span>WCS:TOP</span>
      <span>T/Cplane:TOP</span>
    </p>
    <div className="absolute right-6 bottom-[9px] w-24 text-center">
      <p className="font-['DejaVu_Sans',sans-serif] text-[12px] leading-[14px] font-bold text-[#2cd83c]">1.5420</p>
      <p className="pr-6 font-['DejaVu_Sans',sans-serif] text-[12px] leading-[14px]">Inch</p>
    </div>
  </main>
);

const cell = "flex h-6 shrink-0 items-center justify-center border border-t-[#8a8a84] border-l-[#8a8a84] border-r-white border-b-white";

const StatusBar = () => {
  const [depth, setDepth] = useState("0.0");
  const [level, setLevel] = useState("1");
  return (
    <footer className="flex h-[33px] shrink-0 items-start gap-[3px] overflow-hidden border-t border-white bg-[#cfd0c8] pt-[3px]">
      <span className="flex-1" />
      <button type="button" className={clsx(cell, "w-6")}>3D</button>
      <button type="button" className={clsx(cell, "w-[46px]")}>Gview</button>
      <button type="button" className={clsx(cell, "w-9")}>Planes</button>
      <div className={clsx(cell, "w-[98px] justify-between pl-[7px]")}>
        <label htmlFor="depth">Z:</label>
        <div className={clsx("flex h-[22px] w-[76px] bg-[#f6f68c]", sunken)}>
          <span className="min-w-0 flex-1 py-px pl-px">
            <input
              id="depth"
              value={depth}
              size={3}
              onChange={(e) => setDepth(e.target.value)}
              className="h-4 w-[21px] bg-[#0a246a] text-[12px] font-bold text-white outline-none"
            />
          </span>
          <DropButton label="Depth history" />
        </div>
      </div>
      <button type="button" className={clsx(cell, "w-[49px] justify-start")}>
        <span className="h-[18px] w-[30px] bg-[#00f400] leading-4">10</span>
        <span className="flex flex-1 justify-center">
          <Arrow big />
        </span>
      </button>
      <div className={clsx(cell, "w-[128px] justify-between pl-[6px]")}>
        <label htmlFor="level">Level:</label>
        <div className={clsx("flex h-5 w-[86px] bg-[#f8f8f8]", sunken)}>
          <input id="level" value={level} onChange={(e) => setLevel(e.target.value)} className="w-full min-w-0 bg-transparent px-1 outline-none" />
          <DropButton label="Levels" />
        </div>
      </div>
      <button type="button" className={clsx(cell, "w-[59px]")}>Attributes</button>
      <div className={clsx("flex h-6 w-8 shrink-0 items-center bg-[#f8f8f8]", sunken)}>
        <svg viewBox="0 0 12 12" className="size-3" aria-hidden="true">
          <path d="M6 2v9M1 6.5h10M3 10l6-7" stroke="#000" />
        </svg>
        <DropButton label="Point style" />
      </div>
      <div className={clsx("flex h-6 w-[62px] shrink-0 items-center bg-[#f8f8f8]", sunken)}>
        <span className="mr-px h-[3px] flex-1 bg-black" />
        <DropButton label="Line width" />
      </div>
      <div className={clsx("ml-0.5 flex h-6 w-[66px] shrink-0 items-center bg-[#f8f8f8]", sunken)}>
        <span className="mr-px h-px flex-1 bg-black" />
        <DropButton label="Line style" />
      </div>
      <button type="button" className={clsx(cell, "w-[41px]")}>WCS</button>
      <button type="button" className={clsx(cell, "w-[52px]")}>Groups</button>
      <button type="button" className={clsx(cell, "w-[14px]")}>!</button>
      <button type="button" className={clsx(cell, "-mr-[5px] w-4")}>?</button>
    </footer>
  );
};

const App = () => {
  const [pick, setPick] = useState("In");

  return (
    <div className="flex h-screen flex-col overflow-hidden bg-[#cfd0c8] font-['DejaVu_Sans_Condensed','DejaVu_Sans',sans-serif] text-[11px] leading-[14px] text-black">
      <header className="flex h-[25px] shrink-0 items-center bg-linear-to-r from-[#0a246a] to-[#a6caf0] pl-1 pr-0.5">
        <svg viewBox="0 0 16 16" className="size-4" aria-hidden="true">
          <path d="M1 2l4-1 3 5 5-5 2 1-5 6 4 6-4 1-3-5-5 5-1-1 5-6z" fill="#e0e0d4" stroke="#202840" strokeWidth=".5" />
        </svg>
        <h1 className="ml-1.5 flex-1 text-[13px] font-bold text-white">Mastercam Mill X3</h1>
        <div className="flex">
          {["Minimize", "Restore", "Close"].map((name) => (
            <button
              key={name}
              type="button"
              aria-label={name}
              className={clsx("flex h-5 w-4 items-center justify-center bg-[#cfd0c8]", raised, name === "Close" && "ml-0.5")}
            >
              <svg viewBox="0 0 10 10" className="size-[10px]" fill="none" stroke="#000" shapeRendering="crispEdges">
                {name === "Minimize" && <path d="M2 9h6" strokeWidth="2" />}
                {name === "Restore" && <path d="M3.5 4V1h6v5H7M.5 4.5h6v5h-6zM1 5h6M3 1.500h6" />}
                {name === "Close" && <path d="M1 1l8 8M9 1 1 9" strokeWidth="2" shapeRendering="auto" />}
              </svg>
            </button>
          ))}
        </div>
      </header>

      <nav className="flex h-[22px] shrink-0 items-center gap-[11px] border-b border-[#8a8a84] pl-[5px]">
        {menus.map((menu) => (
          <button key={menu} type="button">
            {menu}
          </button>
        ))}
      </nav>

      <div className="flex h-[30px] shrink-0 border-t border-white">
        <ToolGroup items={["new", "open", "save", "print", "preview", "funnel"]} />
        <span className="w-[38px] shrink-0 border-r border-b border-[#8a8a84]" />
        <ToolGroup items={["undo", "redo"]} />
        <span className="w-[15px] shrink-0 border-r border-b border-[#8a8a84]" />
        <ToolGroup
          items={["pan", "repaint", "|", "zoomWindow", "zoomTarget", "zoomSel", "|", "unzoom", "unzoomHalf", "|", "bino", "binoBack", "binoCheck"]}
        />
        <span className="w-[67px] shrink-0 border-r border-b border-[#8a8a84]" />
        <ToolGroup items={["cubeTop", "cubeFront", "cubeSide", "cubeIso"]} />
        <ToolGroup className="ml-[26px] border-l" items={["cubeRed", "v"]} />
        <ToolGroup className="ml-[13px] border-l" items={["pencil", "pencils", "v", "|", "eraserGray", "v-"]} />
        <ToolGroup className="ml-[32px] border-l" items={["lineQ", "columns", "|", "blocks", "repaintOrange", "sigma", "exit", "v"]} />
        <ToolGroup className="ml-[45px] border-l" items={["globe", "v", "sphere", "v"]} />
      </div>

      <div className="flex h-[30px] shrink-0">
        <ToolGroup items={["plus", "v", "line", "v", "circle", "v", "rect", "v", "fillet", "v", "spline", "v", "cylinder", "v"]} />
        <span className="w-[67px] shrink-0 border-r border-b border-[#8a8a84]" />
        <ToolGroup items={["trim", "breakTool", "v"]} />
        <span className="w-[18px] shrink-0 border-r border-b border-[#8a8a84]" />
        <ToolGroup
          items={["xformMove", "xformRotate", "xformMirror", "xformScale", "xformPlus", "xformProject", "|", "offset", "v", "array", "triangle", "v"]}
        />
        <span className="w-[75px] shrink-0 border-r border-b border-[#8a8a84]" />
        <ToolGroup items={["bulb", "arrowDown", "|", "circleArrow", "v", "upArrows", "v", "|", "checker"]} />
      </div>

      <div className="flex h-[31px] shrink-0 border-b border-[#8a8a84]">
        <div className="flex shrink-0 items-center gap-3 bg-[#f6f6cc] pl-[5px]">
          <AxisField axis="X" initial="6.53487" />
          <AxisField axis="Y" initial="6.19591" />
          <AxisField axis="Z" initial="0.0" />
        </div>
        <div className="flex shrink-0 items-center gap-px border-r border-[#8a8a84] bg-[#f6f6cc] pr-[5px] pl-1.5">
          {["fastPoint", "bang", "pad"].map((name) => (
            <button key={name} type="button" aria-label={name} className="flex size-[23px] items-center justify-center bg-[#cfd0c8]">
              <Icon name={name} />
            </button>
          ))}
          <button type="button" aria-label="More" className="flex h-[23px] w-3 items-center justify-center bg-[#cfd0c8]">
            <Arrow muted />
          </button>
          <button type="button" aria-label="Help" className="ml-0.5 flex size-[23px] items-center justify-center bg-[#cfd0c8]">
            <Icon name="help" />
          </button>
        </div>
        <div className="w-[114px] shrink-0 border-t border-r border-[#8a8a84]" />
        <div className="flex shrink-0 items-center border-t border-r border-[#8a8a84] bg-[#f6f6cc] pl-1 pr-2">
          <span className="mr-[7px] h-6 w-[3px] border border-t-white border-l-white border-r-[#8a8a84] border-b-[#8a8a84]" />
          <button type="button" className={clsx("mr-2 h-[23px] w-[47px] bg-[#cfd0c8]", raised)}>
            All...
          </button>
          <button type="button" className={clsx("mr-[7px] h-[23px] w-[47px] bg-[#cfd0c8]", raised)}>
            Only...
          </button>
          <SquareButton icon="pickCursor" />
          <div className={clsx("relative ml-[7px] flex h-5 w-[71px] bg-[#f8f8f8]", sunken)}>
            <select
              aria-label="Selection mode"
              value={pick}
              onChange={(e) => setPick(e.target.value)}
              className="w-full appearance-none bg-transparent pl-px outline-none"
            >
              <option>In</option>
              <option>Out</option>
            </select>
            <span className={clsx("pointer-events-none absolute inset-y-0 right-0 flex w-4 items-center justify-center bg-[#cfd0c8]", raised)}>
              <Arrow />
            </span>
          </div>
          <button type="button" aria-label="Window" className="ml-2.5 mr-[3px] flex h-[23px] w-9 items-center justify-center gap-1.5 bg-[#cfd0c8]">
            <Icon name="marquee" />
            <Arrow />
          </button>
          <SquareButton icon="cursor" />
          <SquareButton icon="blobEdge" className="ml-px" />
          <SquareButton icon="blob" className="ml-[7px]" />
          <SquareButton icon="blob" className="ml-px" />
          <SquareButton icon="blob" className="ml-px" />
          <SquareButton icon="cubeGray" className="ml-[7px]" />
          <SquareButton icon="arrowGray" className="ml-px" />
          <SquareButton icon="cursorCheck" className="ml-[7px]" />
          <SquareButton icon="ban" className="ml-[7px]" />
          <SquareButton icon="ball" className="ml-px" />
          <SquareButton icon="help" className="ml-[7px]" />
        </div>
      </div>

      <div className="flex h-[31px] shrink-0 items-center border-t border-b border-t-white border-b-[#8a8a84] pl-[187px]">Ribbon Bar</div>

      <div className="flex h-[29px] shrink-0 border-t border-white">
        <ToolGroup
          items={[
            "hammerGray", "sail", "|", "dim", "xformPlus", "triangle", "rollers", "|", "cubeHole", "cubeSquare", "drill", "pocket",
            "|", "holder", "|", "five", "fiveTool", "|", "four", "|", "wedge",
          ]}
        />
      </div>

      <div className="flex min-h-0 flex-1 border-t border-[#8a8a84]">
        <aside className="w-[29px] shrink-0 pr-px">
          <SideTools
            items={[
              "cubeHole", "cubeSquare", "|", "contour", "mill", "spiral", "pocket", "drill", "|", "hook", "threads", "slot", "helix",
              "|", "millCheck", "spiralRed", "|", "dimBlue", "surf", "expand", "block",
            ]}
          />
        </aside>
        <OperationsManager />
        <Viewport />
        <aside className="w-[31px] shrink-0 overflow-hidden border-l-2 border-white pr-px">
          <SideTools items={["globeHalf", "drill", "boxUp", "xformMove", "trim", "undo", "cubeIso", "cubeTop", "fillet", "rect"]} />
          <SideTools
            items={["boltPlus", "boltShape", "boltLine", "boltCircle", "boltSpline", "gridRed", "boltCube", "globe", "|", "swatchUp", "swatchDown", "|", "boltLine"]}
          />
        </aside>
      </div>

      <StatusBar />
    </div>
  );
};

export default App;
